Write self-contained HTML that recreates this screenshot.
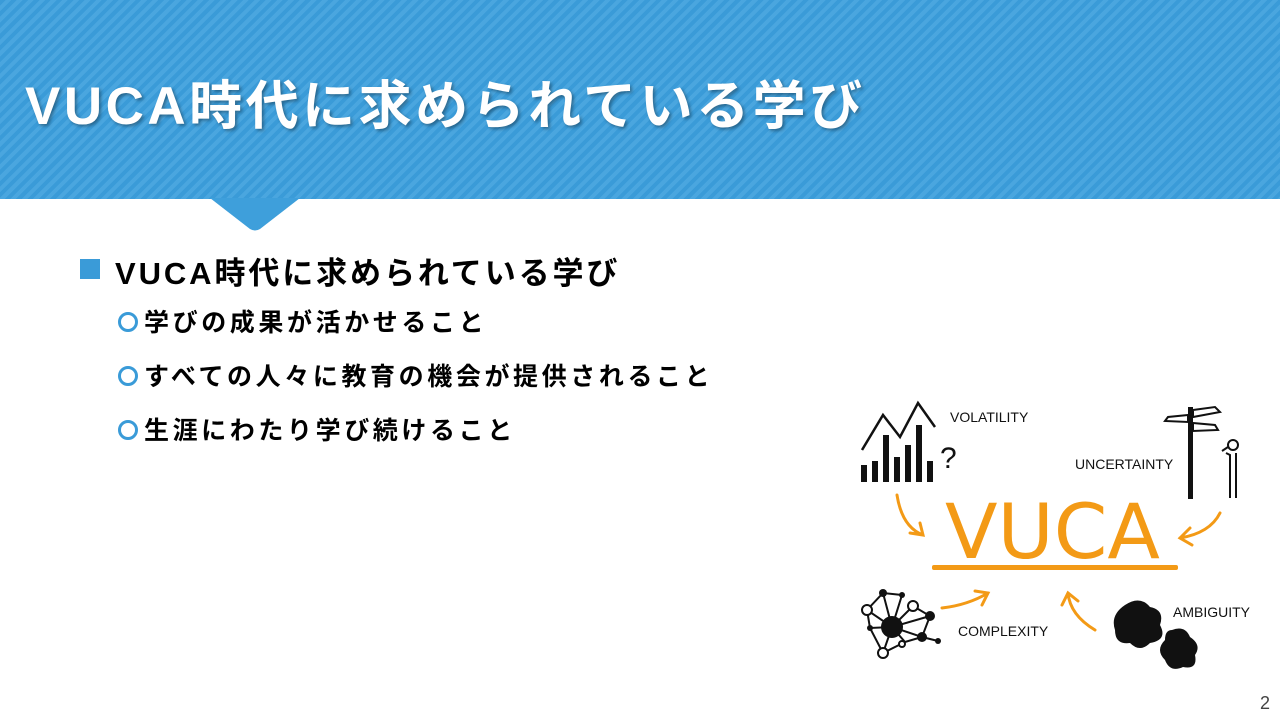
<!DOCTYPE html>
<html><head><meta charset="utf-8"><style>
body{margin:0;width:1280px;height:720px;overflow:hidden;background:#fff;font-family:"Liberation Sans","Noto Sans CJK JP",sans-serif;position:relative}
.hdr{position:absolute;left:0;top:0;width:1280px;height:199px;background:#3a9bd8;background-image:repeating-linear-gradient(135deg,#3a9bd8 0 4px,#4aa6df 4px 8px)}
.title{position:absolute;left:25px;top:64px;font-size:53px;font-weight:bold;color:#fff;text-shadow:2px 2px 3px rgba(0,0,0,.35);letter-spacing:3.5px;white-space:nowrap}
.l1{position:absolute;left:80px;top:248px;font-size:31px;font-weight:bold;color:#000;white-space:nowrap;letter-spacing:2.9px}
.sq{position:absolute;left:80px;top:259px;width:20px;height:20px;background:#3a9bd8}
.l2{position:absolute;left:118px;font-size:25px;font-weight:bold;color:#000;white-space:nowrap;letter-spacing:3.6px}
.c{display:inline-block;border:3px solid #3a9bd8;border-radius:50%;vertical-align:-1px;margin-right:6px;box-sizing:border-box;width:20px;height:20px}
.pg{position:absolute;right:10px;bottom:6px;font-size:18px;color:#444}
</style></head><body>
<div class="hdr"></div>
<svg style="position:absolute;left:205px;top:198px" width="100" height="36"><path d="M5 0 L95 0 L55 31 Q50 34 45 31 Z" fill="#3e9fdb"/></svg>
<div class="title">VUCA時代に求められている学び</div>
<div class="sq"></div>
<div class="l1" style="left:115px">VUCA時代に求められている学び</div>
<div class="l2" style="top:303px"><span class="c"></span>学びの成果が活かせること</div>
<div class="l2" style="top:357px"><span class="c"></span>すべての人々に教育の機会が提供されること</div>
<div class="l2" style="top:411px"><span class="c"></span>生涯にわたり学び続けること</div>
<svg style="position:absolute;left:850px;top:395px" width="420" height="280" viewBox="0 0 420 280">
<g fill="#111"><rect x="11" y="70" width="6" height="17"/><rect x="22" y="66" width="6" height="21"/><rect x="33" y="40" width="6" height="47"/><rect x="44" y="62" width="6" height="25"/><rect x="55" y="50" width="6" height="37"/><rect x="66" y="30" width="6" height="57"/><rect x="77" y="66" width="6" height="21"/></g>
<path d="M12 55 L33 20 L50 42 L68 8 L85 32" fill="none" stroke="#111" stroke-width="2.5"/>
<text x="90" y="73" font-size="30" fill="#111" font-family="Liberation Sans">?</text>
<text x="100" y="27" font-size="14" fill="#111">VOLATILITY</text>
<text x="225" y="74" font-size="14" fill="#111">UNCERTAINTY</text>
<rect x="338" y="12" width="5" height="92" fill="#111"/>
<path d="M343 15 L365 12 L370 17 L343 22 Z M338 20 L318 22 L315 26 L338 27 Z M343 28 L365 30 L368 35 L343 36 Z" fill="none" stroke="#111" stroke-width="2"/>
<circle cx="383" cy="50" r="5" fill="none" stroke="#111" stroke-width="2"/>
<path d="M376 58 L380 60 L380 103 M386 58 L386 103 M372 56 L378 52" stroke="#111" stroke-width="2" fill="none"/>
<text x="95" y="163" font-size="76" fill="#f39a16" font-family="DejaVu Sans" textLength="215" lengthAdjust="spacingAndGlyphs">VUCA</text>
<rect x="82" y="170" width="246" height="5" rx="2" fill="#f39a16"/>
<g fill="none" stroke="#f39a16" stroke-width="3" stroke-linecap="round">
<path d="M47 100 Q52 132 73 140 M60 138 L73 140 L70 128"/>
<path d="M370 118 Q360 138 330 143 M340 133 L330 143 L342 150"/>
<path d="M92 213 Q118 210 138 198 M125 196 L138 198 L132 210"/>
<path d="M245 235 Q220 220 218 198 M212 210 L218 198 L228 206"/>
</g>
<text x="108" y="241" font-size="14" fill="#111">COMPLEXITY</text>
<text x="323" y="222" font-size="14" fill="#111">AMBIGUITY</text>
<g stroke="#111" stroke-width="2" fill="none">
<path d="M42 232 L33 198 L17 215 L42 232 L52 200 L33 198 M42 232 L63 211 L80 221 L42 232 L72 242 L80 221 M42 232 L55 247 L72 242 M42 232 L20 233 L17 215 M42 232 L33 258 L55 247 M72 242 L88 246 M20 233 L33 258"/>
</g>
<circle cx="42" cy="232" r="11" fill="#111"/>
<g fill="#fff" stroke="#111" stroke-width="2"><circle cx="17" cy="215" r="5"/><circle cx="63" cy="211" r="5"/><circle cx="33" cy="258" r="5"/><circle cx="52" cy="249" r="3"/></g>
<g fill="#111"><circle cx="33" cy="198" r="4"/><circle cx="52" cy="200" r="3"/><circle cx="80" cy="221" r="5"/><circle cx="72" cy="242" r="5"/><circle cx="88" cy="246" r="3"/><circle cx="20" cy="233" r="3"/></g>
<path d="M275 210 Q290 200 300 212 Q315 215 310 230 Q318 245 300 248 Q290 258 280 248 Q265 250 265 235 Q260 220 275 210Z" fill="#111"/>
<path d="M322 235 Q335 230 340 242 Q352 250 345 260 Q348 275 333 272 Q320 278 315 265 Q305 255 315 245 Q315 235 322 235Z" fill="#111"/>
</svg>
<div class="pg">2</div>
</body></html>
